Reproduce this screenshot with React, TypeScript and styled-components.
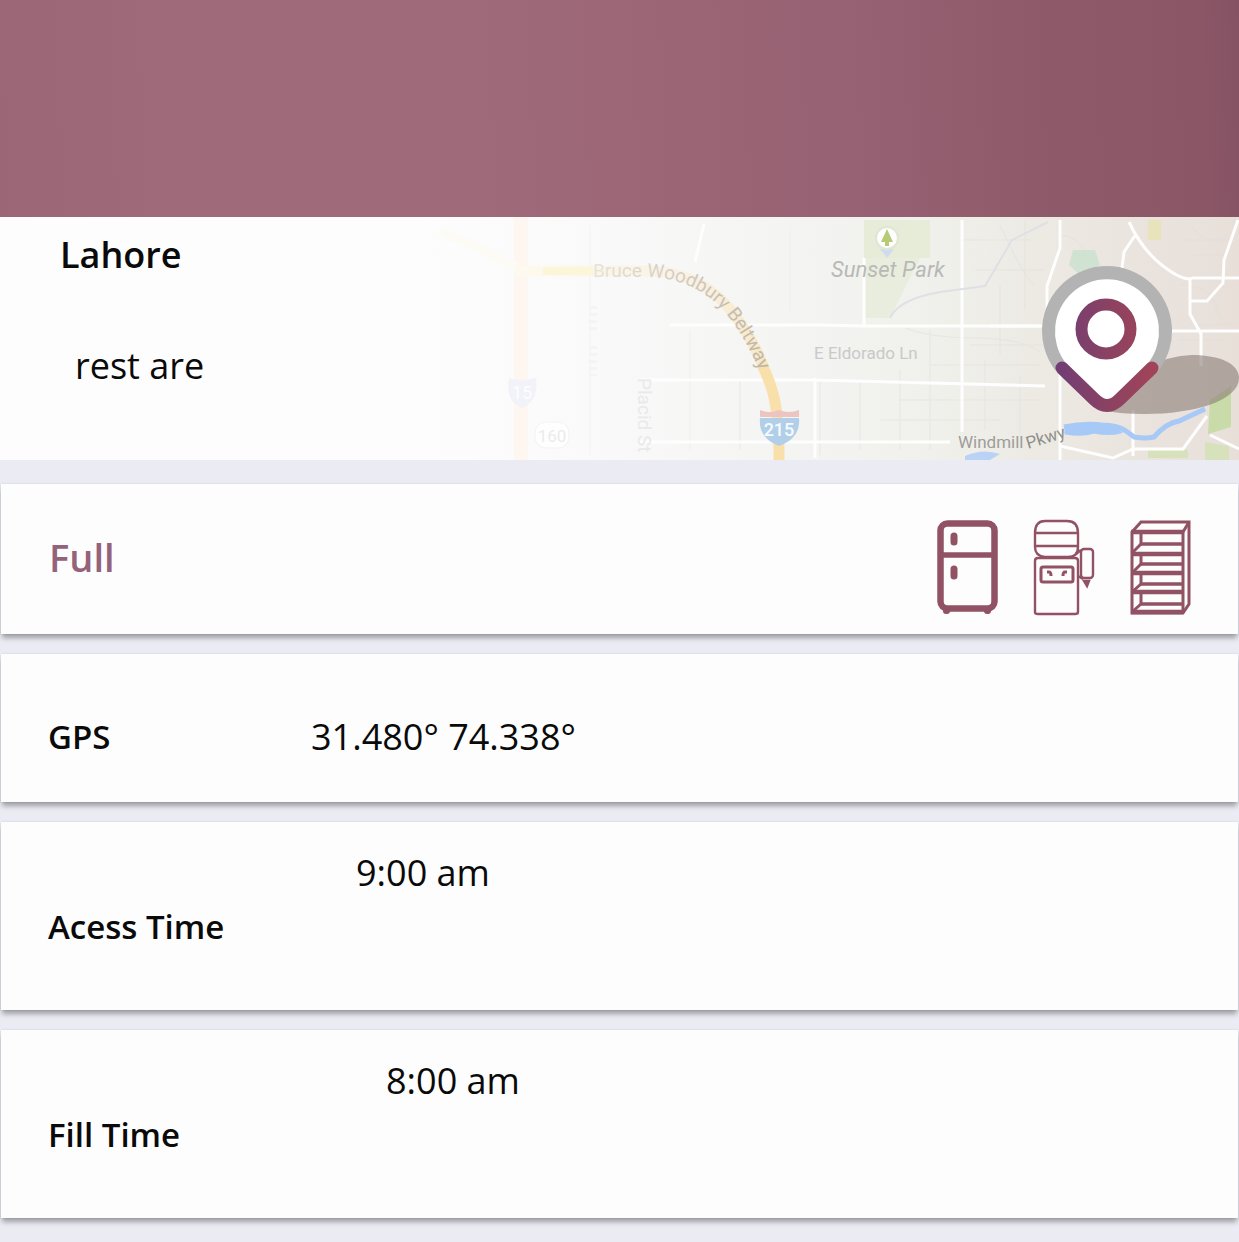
import React from "react";
import styled, { createGlobalStyle } from "styled-components";

const GlobalStyle = createGlobalStyle`
  *, *::before, *::after { box-sizing: border-box; }
  body {
    margin: 0;
    background: #ebebf4;
    color: #0a0a0a;
    font-family: "Open Sans", "Noto Sans", sans-serif;
  }
`;

const Page = styled.main`
  display: flex;
  flex-direction: column;
  padding-bottom: 24px;
`;

const Banner = styled.header`
  height: 217px;
  background: linear-gradient(
    88deg,
    #9b6676 0%,
    #9f6b7b 14%,
    #9f6b7b 36%,
    #9c6677 52%,
    #966172 70%,
    #8f5b6b 83%,
    #8b5767 97%,
    #855264 100%
  );
`;

const Place = styled.section`
  display: grid;
  margin-bottom: 24px;
  overflow: hidden;
  background: #fdfdfd;
`;

const PlaceText = styled.div`
  grid-area: 1 / 1;
  justify-self: start;
  z-index: 1;
  padding: 11px 60px 67px;
`;

const City = styled.h1`
  margin: 0 0 57px;
  font-size: 36px;
  font-weight: 600;
  line-height: 54px;
`;

const Note = styled.p`
  margin: 0;
  padding-left: 15px;
  font-size: 36px;
  line-height: 54px;
`;

const MapArt = styled.svg`
  grid-area: 1 / 1;
  justify-self: end;
  display: block;
  width: 819px;
  height: 243px;
  font-family: Roboto, sans-serif;
`;

const Cards = styled.div`
  display: flex;
  flex-direction: column;
  gap: 20px;
  margin: 0 1px;
`;

const Card = styled.section`
  background: #fdfdfd;
  box-shadow: 0 5px 5px -1px rgba(0, 0, 0, 0.32), 0 0 2px rgba(0, 0, 0, 0.12);
`;

const StatusCard = styled(Card)`
  display: flex;
  align-items: center;
  justify-content: space-between;
  padding: 34px 47px 18px 48px;
`;

const Status = styled.h2`
  margin: 0;
  padding-bottom: 20px;
  color: #94627a;
  font-size: 38px;
  font-weight: 600;
  line-height: 54px;
`;

const Amenities = styled.div`
  display: flex;
  gap: 34px;
`;

const Amenity = styled.svg`
  display: block;
  width: 62px;
  height: 98px;
  fill: none;
  stroke: #915263;
`;

const InlineCard = styled(Card)`
  display: grid;
  grid-template-columns: 263px 1fr;
  padding: 56px 47px 38px;
`;

const StackedCard = styled(Card)`
  display: flex;
  flex-direction: column-reverse;
  padding: 24px 47px 56px;
`;

const Label = styled.h3`
  margin: 0;
  font-size: 33px;
  font-weight: 600;
  line-height: 54px;
`;

const Value = styled.p<{ $indent?: number }>`
  margin: 0;
  padding-left: ${({ $indent = 0 }) => $indent}px;
  font-size: 36px;
  line-height: 54px;
`;

const CityMap = () => (
  <MapArt viewBox="420 217 819 243" role="img" aria-label="Map with location pin">
    <defs>
      <linearGradient id="land">
        <stop offset="0" stopColor="#fdfdfd" />
        <stop offset=".2" stopColor="#fafafa" />
        <stop offset=".45" stopColor="#f4f4f3" />
        <stop offset=".66" stopColor="#efefea" />
        <stop offset=".8" stopColor="#ece7e1" />
        <stop offset="1" stopColor="#e8dfd9" />
      </linearGradient>
      <linearGradient id="belt" gradientUnits="userSpaceOnUse" x1="440" y1="0" x2="780" y2="0">
        <stop offset="0" stopColor="#fdfcf8" />
        <stop offset=".35" stopColor="#fdf8ea" />
        <stop offset=".75" stopColor="#faf1e2" />
        <stop offset=".92" stopColor="#faeacb" />
        <stop offset="1" stopColor="#fadfa6" />
      </linearGradient>
      <linearGradient id="beltText" gradientUnits="userSpaceOnUse" x1="590" y1="0" x2="770" y2="0">
        <stop offset="0" stopColor="#e6e4df" />
        <stop offset="1" stopColor="#bbb5a7" />
      </linearGradient>
      <linearGradient id="pin" gradientUnits="userSpaceOnUse" x1="1057" y1="0" x2="1158" y2="0">
        <stop offset="0" stopColor="#713d75" />
        <stop offset=".5" stopColor="#8a4262" />
        <stop offset="1" stopColor="#a34458" />
      </linearGradient>
      <path id="beltLabel" d="M593 277 H645 C702 278 732 310 757 365 L764 380" />
    </defs>
    <rect x="420" y="217" width="819" height="243" fill="url(#land)" />
    <rect x="864" y="220" width="66" height="38" fill="#e6ecd8" />
    <path d="M864 258 H920 L890 318 H864z" fill="#e9edde" />
    <path d="M1073 250h22l5 15-18 12-13-12z" fill="#d0e2d2" />
    <path d="M1148 220h13v20h-13z" fill="#e9e3bb" />
    <path d="M1210 400 L1231 386 V427 L1208 434z" fill="#c8dba8" />
    <path d="M1205 442 l24 4 v14h-24z M1148 450h40v8h-40z" fill="#d7e2bd" />
    <g fill="none" stroke="#e1dfd9" strokeWidth="1" opacity=".5">
      <path d="M960 240h70 M975 270h70 M970 345h80 M930 365h110 M900 400h140 M880 420h120 M1180 240h50 M1190 255h40 M1178 340h50 M1190 325h40 M1000 285v70 M1025 220v90 M930 330v120 M900 370v80 M860 380v70 M820 380v75 M740 380v70 M985 360v70 M1020 375v60" />
      <path d="M905 328q25 10 70 10t65 14 M1000 225q20 45 34 60 M1180 285q30 0 35 20t18 18 M1060 235q20 0 30 25 M1190 225q25 30 40 5" />
      <path d="M590 225v230 M690 330v120 M790 230v80" opacity=".4" />
    </g>
    <g fill="none" stroke="#fefefe" strokeWidth="3">
      <path d="M704 224 L695 262 M864 258V326 M962 220V432 M815 378V458 M670 325h150l44 1h180 M640 380h175l230 6 M640 442h310" />
      <path d="M1060 220v28l-13 38v60 M1060 345v115 M990 326h55 M1129 222q13 28 34 44 t30 12h46 M1136 234l-12 18-2 16 M1190 278v36l11 20v32 M1170 331h69 M1238 220l-14 40-1 23-16 18h-16 M1133 410v46 M1060 446l53 12 20-9h50l24-33 M1210 435l29 14" />
    </g>
    <path d="M890 318q10-22 65-28l30-4 27-46 36-18" fill="none" stroke="#dee0e4" strokeWidth="2" />
    <path d="M521 217V460" stroke="#fdf6f1" strokeWidth="14" />
    <path d="M440 232 Q485 248 520 270" fill="none" stroke="#fcfbf5" strokeWidth="9" />
    <path d="M515 271 H650 C705 272 735 307 757 352 C772 385 779 400 779 460" fill="none" stroke="url(#belt)" strokeWidth="11" />
    <path d="M543 271h50" stroke="#fbf5da" strokeWidth="8" />
    <path d="M762 366 Q774 388 777 414 M779 443v17" fill="none" stroke="#f9dfaa" strokeWidth="10" />
    <text fontSize="19" fill="url(#beltText)">
      <textPath href="#beltLabel">Bruce Woodbury Beltway</textPath>
    </text>
    <path d="M509 378q13 4 27 0 q3 23-14 30 q-17-7-13-30z" fill="#f2f2f9" />
    <text x="522" y="399" textAnchor="middle" fontSize="18" fill="#fdfdfd">15</text>
    <rect x="535" y="422" width="34" height="26" rx="11" fill="#fefefe" stroke="#f3f3f3" />
    <text x="552" y="442" textAnchor="middle" fontSize="17" fill="#ebebeb">160</text>
    <text transform="translate(638 378) rotate(90)" fontSize="19" fill="#e9e9e9">Placid St</text>
    <path d="M593 306v28 M593 346v30" stroke="#f4f4f4" strokeWidth="8" strokeDasharray="3 4" />
    <path d="M760 417v-7q10 4 19 0 10 4 20 0v7z" fill="#ecc4c0" />
    <path d="M760 418h39q2 20-20 28-21-8-19-28z" fill="#b2cfe9" />
    <text x="779" y="436" textAnchor="middle" fontSize="18" fontWeight="500" fill="#f7fbff">215</text>
    <path d="M880 249l7 9 7-9z" fill="#cfdced" />
    <circle cx="887" cy="238" r="11" fill="#fefefe" stroke="#e0e5d4" strokeWidth="2" />
    <path d="M887 229l6 13h-4v4h-4v-4h-4z" fill="#b7cb77" />
    <text x="831" y="277" fontSize="22" fontStyle="italic" fill="#b8b9b6">Sunset Park</text>
    <text x="814" y="359" fontSize="17" fill="#c9c9c9">E Eldorado Ln</text>
    <path d="M965 456q18-8 35-2l-10 6h-25z" fill="#bad2f5" />
    <path d="M1064 427q20-4 38-2 16 0 24 6 l8 6q12 2 20 0 12-14 25-16l26-12" fill="none" stroke="#a7c9f7" strokeWidth="5" />
    <path d="M1066 427q18-5 34-1 14 0 20 6-10 3-26 0-12 4-28 1z" fill="#a7c9f7" stroke="#a7c9f7" strokeWidth="3" />
    <text x="958" y="448" fontSize="17" fill="#9d9d99">Windmill</text>
    <text transform="translate(1028 449) rotate(-17)" fontSize="17" fill="#8f8f8b">Pkwy</text>
    <path d="M1107 411 Q1145 355 1192 355 C1220 355 1239 364 1239 378 C1239 401 1193 414 1145 414 Q1120 414 1107 411z" fill="#8b7d76" fillOpacity=".6" />
    <path d="M1055 370 A65 65 0 1 1 1159 370 L1107 411z" fill="#b3b3b3" />
    <path d="M1065 362 A52 52 0 1 1 1149 362 L1115 400 Q1107 406 1099 400z" fill="#fff" />
    <path d="M1062 368 L1094 399 Q1107 412 1120 399 L1152 368" fill="none" stroke="url(#pin)" strokeWidth="13" strokeLinecap="round" />
    <circle cx="1106" cy="329" r="24.5" fill="#fff" stroke="url(#pin)" strokeWidth="12" />
  </MapArt>
);

const FridgeIcon = () => (
  <Amenity viewBox="0 0 62 98" role="img" aria-label="Refrigerator">
    <rect x="3.5" y="5.5" width="54" height="85" rx="7" strokeWidth="6.5" />
    <path d="M3 37h55" strokeWidth="5.5" />
    <path d="M17 18v6 M17 51v7" strokeWidth="7" strokeLinecap="round" />
    <path d="M9 93h1 M50 93h1" strokeWidth="6" strokeLinecap="round" />
  </Amenity>
);

const WaterCoolerIcon = () => (
  <Amenity viewBox="0 0 62 98" role="img" aria-label="Water cooler" strokeWidth="2.4">
    <path d="M12 3h22q11 0 11 12v14q0 10-10 10H12Q2 38 2 29V15Q2 3 12 3z M2 15h43 M2 28h43" />
    <path d="M5 40h37q3 0 3 3v51q0 2-3 2H5q-3 0-3-2V43q0-3 3-3z" />
    <rect x="8" y="49" width="32" height="15" rx="2" strokeWidth="3" />
    <path d="M14 54h2q2 0 2 4 M34 54h-2q-2 0-2 4" strokeWidth="3" />
    <path d="M43 36l5-4 M45 58l5 3" />
    <rect x="48" y="31" width="12" height="29" rx="3" />
    <path d="M51 63h5l-2 5z" fill="#915263" />
  </Amenity>
);

const ShelfIcon = () => (
  <Amenity viewBox="0 0 62 98" role="img" aria-label="Shelves" strokeWidth="3.6">
    <path d="M3 14L12 4h48v82l-6 9H3z" strokeWidth="3" />
    <path d="M2 14h52 M2 36h52 M2 55h52 M2 74h52 M2 94h52" strokeWidth="4.4" />
    <path d="M12 26h42 M12 46h42 M12 66h42 M12 86h42" />
    <path d="M12 15v11 M12 37v9 M12 56v10 M12 75v11 M54 14v80" strokeWidth="3" />
    <path d="M3 35l9-9 M3 55l9-9 M3 74l9-8 M3 94l9-8 M54 14l6-10" strokeWidth="3" />
  </Amenity>
);

export default function App() {
  return (
    <>
      <GlobalStyle />
      <Page>
        <Banner />
        <Place>
          <CityMap />
          <PlaceText>
            <City>Lahore</City>
            <Note>rest are</Note>
          </PlaceText>
        </Place>
        <Cards>
          <StatusCard>
            <Status>Full</Status>
            <Amenities>
              <FridgeIcon />
              <WaterCoolerIcon />
              <ShelfIcon />
            </Amenities>
          </StatusCard>
          <InlineCard>
            <Label>GPS</Label>
            <Value>31.480° 74.338°</Value>
          </InlineCard>
          <StackedCard>
            <Label>Acess Time</Label>
            <Value $indent={308}>9:00 am</Value>
          </StackedCard>
          <StackedCard>
            <Label>Fill Time</Label>
            <Value $indent={338}>8:00 am</Value>
          </StackedCard>
        </Cards>
      </Page>
    </>
  );
}
